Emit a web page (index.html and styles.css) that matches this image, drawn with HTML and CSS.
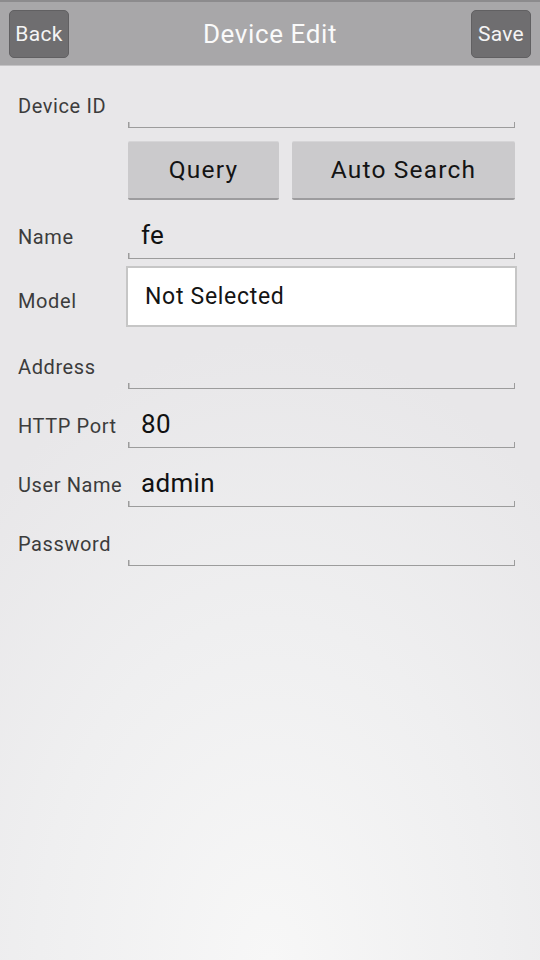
FILE: index.html
```html
<!DOCTYPE html>
<html>
<head>
<meta charset="utf-8">
<link rel="stylesheet" href="styles.css">
</head>
<body>
<div class="app">
  <header class="topbar">
    <button class="bar-btn">Back</button>
    <div class="title">Device Edit</div>
    <button class="bar-btn">Save</button>
  </header>
  <main class="form">
    <div class="row">
      <div class="label">Device ID</div>
      <div class="field"></div>
    </div>
    <div class="btn-row">
      <button class="gray-btn query">Query</button>
      <button class="gray-btn search">Auto Search</button>
    </div>
    <div class="row">
      <div class="label">Name</div>
      <div class="field">fe</div>
    </div>
    <div class="row model-row">
      <div class="label">Model</div>
      <div class="select">Not Selected</div>
    </div>
    <div class="row">
      <div class="label">Address</div>
      <div class="field"></div>
    </div>
    <div class="row">
      <div class="label">HTTP Port</div>
      <div class="field">80</div>
    </div>
    <div class="row">
      <div class="label">User Name</div>
      <div class="field">admin</div>
    </div>
    <div class="row">
      <div class="label">Password</div>
      <div class="field"></div>
    </div>
  </main>
</div>
</body>
</html>
```
FILE: styles.css
```css
html, body {
  margin: 0;
  padding: 0;
}
body {
  width: 540px;
  height: 960px;
  overflow: hidden;
  font-family: Roboto, "Noto Sans", sans-serif;
}
.app {
  width: 540px;
  height: 960px;
  background: radial-gradient(ellipse 420px 620px at 50% 100%, #f7f7f7 0%, #efeff0 55%, #e8e7e9 100%);
  display: flex;
  flex-direction: column;
}
.topbar {
  height: 63px;
  border-top: 2px solid #8c8b8d;
  border-bottom: 1px solid #c4c3c5;
  background: #a8a7a9;
  display: flex;
  align-items: center;
  justify-content: space-between;
  padding: 0 9px;
  box-sizing: content-box;
}
.bar-btn {
  width: 60px;
  height: 48px;
  background: #6f6e70;
  border: 1px solid #616062;
  border-radius: 5px;
  color: #f4f4f4;
  font-family: Roboto, "Noto Sans", sans-serif;
  font-size: 21px;
  letter-spacing: 0.3px;
  padding: 0;
}
.title {
  color: #fafafa;
  font-size: 26px;
  letter-spacing: 0.6px;
}
.form {
  padding: 3px 25px 0 18px;
  display: flex;
  flex-direction: column;
}
.row {
  display: flex;
  height: 59px;
}
.label {
  width: 110px;
  flex: none;
  color: #3c3c3c;
  font-size: 20px;
  letter-spacing: 0.6px;
  white-space: nowrap;
  align-self: flex-end;
  padding-bottom: 10px;
}
.field {
  flex: 1;
  height: 59px;
  box-sizing: border-box;
  border-bottom: 1.5px solid #9c9c9c;
  background:
    linear-gradient(#9c9c9c, #9c9c9c) left bottom / 1.5px 5px no-repeat,
    linear-gradient(#9c9c9c, #9c9c9c) right bottom / 1.5px 5px no-repeat;
  color: #111;
  font-size: 26px;
  letter-spacing: 0.3px;
  padding: 0 0 8px 13px;
  display: flex;
  align-items: flex-end;
}
.btn-row {
  display: flex;
  gap: 13px;
  margin: 13px 0 0 110px;
}
.gray-btn {
  height: 59px;
  background: #cbcacc;
  border: none;
  border-top: 1px solid #d6d5d7;
  border-bottom: 2px solid #9d9c9e;
  border-radius: 2px;
  color: #141414;
  font-family: Roboto, "Noto Sans", sans-serif;
  font-size: 24.5px;
  letter-spacing: 1.2px;
  padding: 0 0 2px;
}
.query {
  width: 151px;
}
.search {
  flex: 1;
}
.model-row {
  height: 61px;
  margin: 7px 0 3px;
}
.model-row .label {
  padding-bottom: 14px;
}
.select {
  flex: 1;
  margin: 0 -2px 0 -2px;
  background: #ffffff;
  border: 2px solid #c6c6c6;
  color: #141414;
  font-size: 23px;
  letter-spacing: 0.7px;
  display: flex;
  align-items: center;
  padding-left: 17px;
}
```
